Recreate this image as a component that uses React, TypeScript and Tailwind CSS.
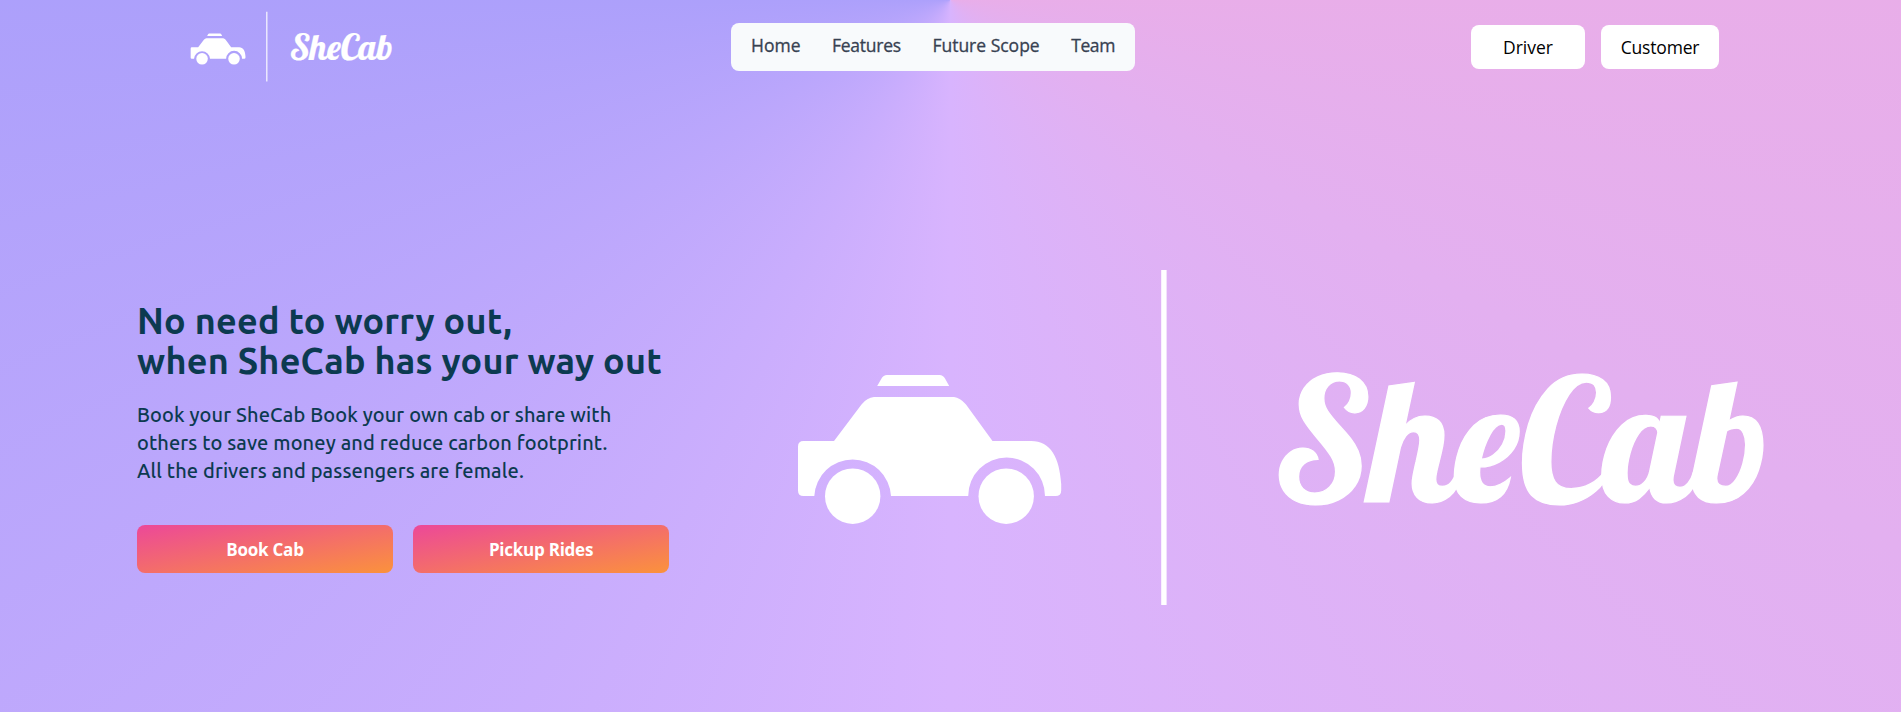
import React from "react";

function Logo({ className }: { className: string }) {
  return (
    <svg viewBox="790 262 980 350" className={className} fill="white" role="img" aria-label="SheCab">
      <path d="M877.2 386 L881.5 378.5 Q883.3 375 887 375 H939.5 Q943.2 375 945 378.5 L949.2 386 Z" />
      <path d="M803.5 441 H834 L861.5 404.5 Q867 397.5 874 397 H954 Q960 397.5 966 404.5 L992.5 441 H1031 C1051 441 1059.500 458 1061.200 484 V490.500 Q1061.200 496 1055.500 496 H1045 A38.400 38.400 0 0 0 968.200 496 H891 A38.400 38.400 0 0 0 814.300 496 H803.500 Q798 496 798 490.500 V446.500 Q798 441 803.500 441 Z" />
      <circle cx="852.700" cy="496.200" r="27.700" />
      <circle cx="1006.200" cy="496.200" r="27.700" />
      <rect x="1161.200" y="270" width="5.400" height="335" />
      <text
        x="1273.5"
        y="501.700"
        fontFamily="Lobster, 'Liberation Serif', serif"
        fontSize="170.500"
        stroke="white"
        strokeWidth="1.2"
      >
        SheCab
      </text>
    </svg>
  );
}

export default function App() {
  return (
    <div className="h-[712px] w-full overflow-hidden bg-[conic-gradient(at_top,#f9a8d4,#d8b4fe,#818cf8)]">
      <header className="flex h-[94px] items-center pl-[189px] pr-[182px] font-['Segoe_UI','Open_Sans',sans-serif] text-[17.5px]">
        <div className="w-[542px] pb-0.5">
          <Logo className="h-[73px] w-[204px] overflow-visible" />
        </div>
        <nav className="flex h-12 w-[404px] items-center justify-between whitespace-nowrap rounded-lg bg-[#f8fafc] px-5 pb-1 font-medium text-[#374151] [-webkit-text-stroke:0.3px_#374151]">
          <a>Home</a>
          <a className="tracking-[-0.25px]">Features</a>
          <a>Future Scope</a>
          <a className="tracking-[-0.4px]">Team</a>
        </nav>
        <div className="ml-auto flex gap-4 text-black">
          <button className="h-11 w-[114px] rounded-lg bg-white">Driver</button>
          <button className="h-11 w-[118px] rounded-lg bg-white tracking-[-0.2px]">Customer</button>
        </div>
      </header>
      <main className="flex h-[618px] pl-[137px] pr-[131px]">
        <section className="w-[532px] pt-[207px] font-[Ubuntu,'Noto_Sans',sans-serif] text-[#0c3a50]">
          <h1 className="whitespace-nowrap text-4xl font-bold tracking-[0.23px]">
            <span className="block">No need to worry out,</span>
            <span className="block">when SheCab has your way out</span>
          </h1>
          <p className="mt-5 whitespace-nowrap text-xl font-medium tracking-[0.13px]">
            <span className="block">Book your SheCab Book your own cab or share with</span>
            <span className="block">others to save money and reduce carbon footprint.</span>
            <span className="block">All the drivers and passengers are female.</span>
          </p>
          <div className="mt-10 flex gap-5 font-['Segoe_UI','Open_Sans',sans-serif] text-[17px] font-bold tracking-[-0.25px] text-white">
            <button className="h-12 w-64 rounded-lg bg-[linear-gradient(to_bottom_right,#ec4899,#fb923c)] pt-0.5">Book Cab</button>
            <button className="h-12 w-64 rounded-lg bg-[linear-gradient(to_bottom_right,#ec4899,#fb923c)] pt-0.5">Pickup Rides</button>
          </div>
        </section>
        <div className="ml-auto pt-[168px]">
          <Logo className="h-[350px] w-[980px] overflow-visible" />
        </div>
      </main>
    </div>
  );
}
